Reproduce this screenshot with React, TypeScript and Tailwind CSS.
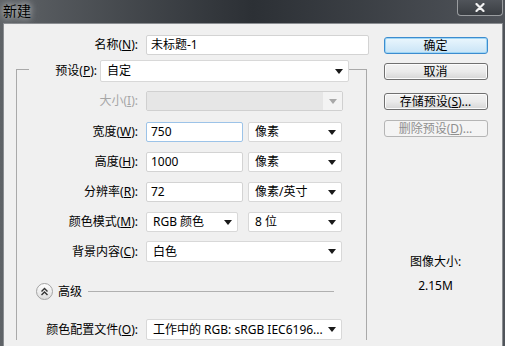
import { ReactNode } from 'react';

const font = "font-['Noto_Sans','Noto_Sans_CJK_SC',sans-serif]";

function Arrow({ muted }: { muted?: boolean }) {
  return (
    <svg width="8" height="5" viewBox="0 0 8 5" className="shrink-0">
      <path d="M0 0 L8 0 L4 5 Z" fill={muted ? '#a8a8a8' : '#1a1a1a'} />
    </svg>
  );
}

function Field({ value, w, focus }: { value: string; w: string; focus?: boolean }) {
  return (
    <div
      className={`${w} h-[20px] bg-white rounded-[2px] border flex items-center pl-[4px] text-[12px] leading-[14px] text-black ${
        focus ? 'border-[#9cc3e8]' : 'border-[#d3d3d3]'
      }`}
    >
      {value}
    </div>
  );
}

function Select({ value, w, h = 'h-[20px]' }: { value: string; w: string; h?: string }) {
  return (
    <div className={`${w} ${h} bg-white rounded-[2px] border border-[#d8d8d8] flex items-center pl-[6px] pr-[5px] text-[12px] leading-[14px] text-black`}>
      <span className="flex-1 whitespace-nowrap">{value}</span>
      <Arrow />
    </div>
  );
}

function Label({ children, w = 'w-[129px]', muted }: { children: ReactNode; w?: string; muted?: boolean }) {
  return (
    <div className={`${w} shrink-0 text-right text-[12px] leading-[14px] pr-[8px] whitespace-nowrap ${muted ? 'text-[#a6a6a6]' : 'text-black'}`}>
      {children}
    </div>
  );
}

function Btn({ children, primary, disabled, mt }: { children: ReactNode; primary?: boolean; disabled?: boolean; mt: string }) {
  return (
    <div
      className={`${mt} w-[104px] h-[17px] rounded-[3px] border flex items-center justify-center text-[12px] leading-[14px] ${
        primary
          ? 'border-[#3c8ccf] bg-gradient-to-b from-[#eaf6fd] to-[#c9e4f6] shadow-[inset_0_0_0_1px_#9fd6f5]'
          : disabled
          ? 'border-[#b5b5b5] bg-[#f4f4f4] text-[#8f8f8f]'
          : 'border-[#707070] bg-gradient-to-b from-[#f2f2f2] via-[#ebebeb] to-[#d6d6d6] shadow-[inset_0_0_0_1px_#fcfcfc]'
      } ${disabled ? '' : 'text-black'}`}
    >
      {children}
    </div>
  );
}

export default function App() {
  return (
    <div className={`w-[505px] h-[346px] overflow-hidden bg-gradient-to-r from-[#5f6367] via-[#2c3035] to-[#50545a] ${font}`}>
      {/* title bar */}
      <div className="h-[23px] flex items-start justify-between">
        <span className="ml-[3px] mt-[3px] text-[14px] leading-[16px] text-black [text-shadow:0_0_6px_#cfd2d4,0_0_10px_#aeb2b5]">新建</span>
        <div className="mr-[2px] w-[46px] h-[16px] rounded-b-[4px] border border-t-0 border-[#9a9da0] bg-gradient-to-b from-[#50545a] to-[#3a3e43] flex items-center justify-center">
          <svg width="10" height="9" viewBox="0 0 10 9">
            <path d="M1.5 1 L8.5 8 M8.5 1 L1.5 8" stroke="#f2f2f2" strokeWidth="2.2" strokeLinecap="round" />
          </svg>
        </div>
      </div>

      {/* client area */}
      <div className="ml-[3px] mr-[2px] h-[323px] border border-b-0 border-[#8a8d91] bg-[#f0f0f0] flex">
        {/* left column */}
        <div className="w-[365px] shrink-0 flex flex-col">
          <div className="mt-[11px] flex items-center">
            <Label w="w-[142px]">
              名称(<u>N</u>):
            </Label>
            <Field value="未标题-1" w="w-[223px]" />
          </div>

          {/* group box */}
          <div className="ml-[12px] w-[351px] mt-[5px] flex flex-col">
            <div className="flex items-stretch">
              <div className="w-[13px] mt-[9px] border-t border-l border-[#a9a9a9]" />
              <div className="w-[71px] text-right pr-[3px] text-[12px] leading-[14px] whitespace-nowrap text-black self-center">
                预设(<u>P</u>):
              </div>
              <Select value="自定" w="w-[249px]" h="h-[22px]" />
              <div className="flex-1 mt-[9px] border-t border-r border-[#a9a9a9]" />
            </div>
            <div className="flex-1 border-l border-r border-[#a9a9a9] flex flex-col h-[260px]">
              <div className="mt-[9px] flex items-center">
                <Label muted>
                  大小(<u>I</u>):
                </Label>
                <div className="w-[197px] h-[20px] rounded-[2px] border border-[#d0d0d0] flex">
                  <div className="flex-1 bg-[#e6e6e6]" />
                  <div className="w-[19px] bg-[#f3f3f3] flex items-center justify-center">
                    <Arrow muted />
                  </div>
                </div>
              </div>
              <div className="mt-[11px] flex items-center">
                <Label>
                  宽度(<u>W</u>):
                </Label>
                <Field value="750" w="w-[97px]" focus />
                <div className="ml-[5px]">
                  <Select value="像素" w="w-[94px]" />
                </div>
              </div>
              <div className="mt-[10px] flex items-center">
                <Label>
                  高度(<u>H</u>):
                </Label>
                <Field value="1000" w="w-[97px]" />
                <div className="ml-[5px]">
                  <Select value="像素" w="w-[94px]" />
                </div>
              </div>
              <div className="mt-[10px] flex items-center">
                <Label>
                  分辨率(<u>R</u>):
                </Label>
                <Field value="72" w="w-[97px]" />
                <div className="ml-[5px]">
                  <Select value="像素/英寸" w="w-[94px]" />
                </div>
              </div>
              <div className="mt-[10px] flex items-center">
                <Label>
                  颜色模式(<u>M</u>):
                </Label>
                <Select value="RGB 颜色" w="w-[92px]" />
                <div className="ml-[10px]">
                  <Select value="8 位" w="w-[94px]" />
                </div>
              </div>
              <div className="mt-[9px] flex items-center">
                <Label>
                  背景内容(<u>C</u>):
                </Label>
                <Select value="白色" w="w-[196px]" h="h-[21px]" />
              </div>
              <div className="mt-[21px] flex items-center">
                <div className="ml-[19px] w-[17px] h-[17px] rounded-full border border-[#a3a3a3] bg-gradient-to-b from-white to-[#dedede] flex items-center justify-center">
                  <svg width="9" height="9" viewBox="0 0 9 9">
                    <path d="M1.5 4.5 L4.5 1.5 L7.5 4.5 M1.5 8 L4.5 5 L7.5 8" fill="none" stroke="#333" strokeWidth="1.4" />
                  </svg>
                </div>
                <span className="ml-[5px] text-[12px] leading-[14px] text-black">高级</span>
                <div className="ml-[6px] w-[246px] border-t border-[#b0b0b0]" />
              </div>
              <div className="mt-[19px] flex items-center">
                <Label>
                  颜色配置文件(<u>O</u>):
                </Label>
                <Select value="工作中的 RGB: sRGB IEC6196..." w="w-[196px]" h="h-[21px]" />
              </div>
            </div>
          </div>
        </div>

        {/* right column */}
        <div className="flex-1 flex flex-col items-center">
          <Btn primary mt="mt-[13px]">确定</Btn>
          <Btn mt="mt-[9px]">取消</Btn>
          <Btn mt="mt-[13px]">
            存储预设(<u>S</u>)...
          </Btn>
          <Btn disabled mt="mt-[10px]">
            删除预设(<u>D</u>)...
          </Btn>
          <div className="mt-[118px] text-[12px] leading-[14px] text-black">图像大小:</div>
          <div className="mt-[10px] text-[12px] leading-[14px] text-black">2.15M</div>
        </div>
      </div>
    </div>
  );
}
